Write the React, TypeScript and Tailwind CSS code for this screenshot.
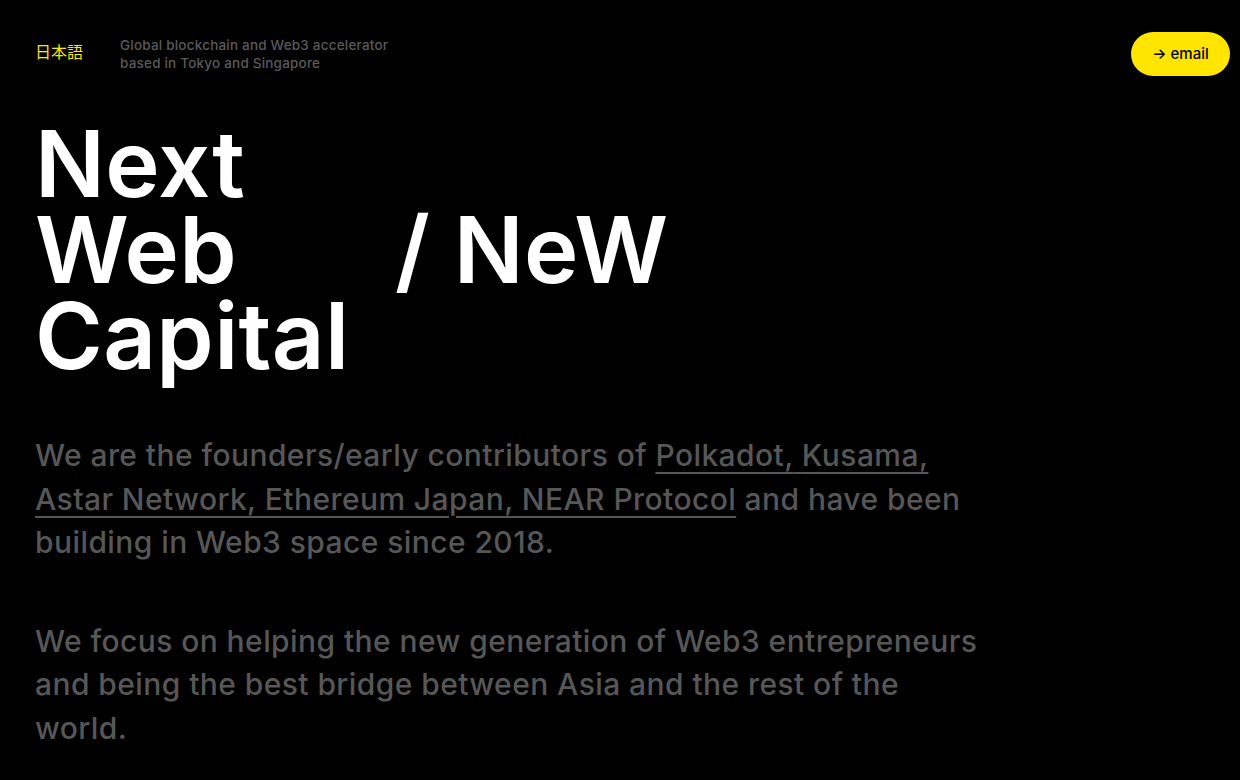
import React from 'react';

const links = {
  polkadot: 'Polkadot,',
  kusama: 'Kusama,',
};

const App: React.FC = () => {
  return (
    <div className="min-h-[780px] bg-black text-white font-['Inter','Noto_Sans_CJK_JP',sans-serif]">
      {/* Top bar */}
      <header className="flex items-center justify-between pl-[35px] pr-[10px] pt-[32px]">
        <div className="flex items-center">
          <a href="#" className="mb-[7px] w-[85px] text-[16px] text-[#ffe500] font-['Noto_Sans_CJK_JP',sans-serif]">
            日本語
          </a>
          <p className="text-[13.5px] leading-[18px] tracking-[0.015em] text-[#5a5a5a] font-medium">
            Global blockchain and Web3 accelerator
            <br />
            based in Tokyo and Singapore
          </p>
        </div>
        <a
          href="#"
          className="flex h-[44px] w-[99px] items-center justify-center rounded-full bg-[#ffe500] text-[15px] font-medium text-black"
        >
          → email
        </a>
      </header>

      {/* Title */}
      <div className="mt-[45px] grid grid-cols-[360px_auto] pl-[35px]">
        <h1 className="text-[92px] leading-[86px] font-semibold tracking-[0.004em]">
          Next
          <br />
          Web
          <br />
          Capital
        </h1>
        <div className="self-center text-[92px] leading-[86px] font-semibold tracking-[0.004em]">/ NeW</div>
      </div>

      {/* About */}
      <div className="mt-[55px] space-y-[55px] pl-[35px] text-[30px] leading-[43.5px] font-medium tracking-[0.014em] text-[#575757]">
        <p>
          We are the founders/early contributors of{' '}
          <a href="#" className="underline decoration-2 underline-offset-[6px]">
            {links.polkadot} {links.kusama}
          </a>
          <br />
          <a href="#" className="underline decoration-2 underline-offset-[6px]">
            Astar Network, Ethereum Japan, NEAR Protocol
          </a>{' '}
          and have been
          <br />
          building in Web3 space since 2018.
        </p>
        <p>
          We focus on helping the new generation of Web3 entrepreneurs
          <br />
          and being the best bridge between Asia and the rest of the
          <br />
          world.
        </p>
      </div>
    </div>
  );
};

export default App;
